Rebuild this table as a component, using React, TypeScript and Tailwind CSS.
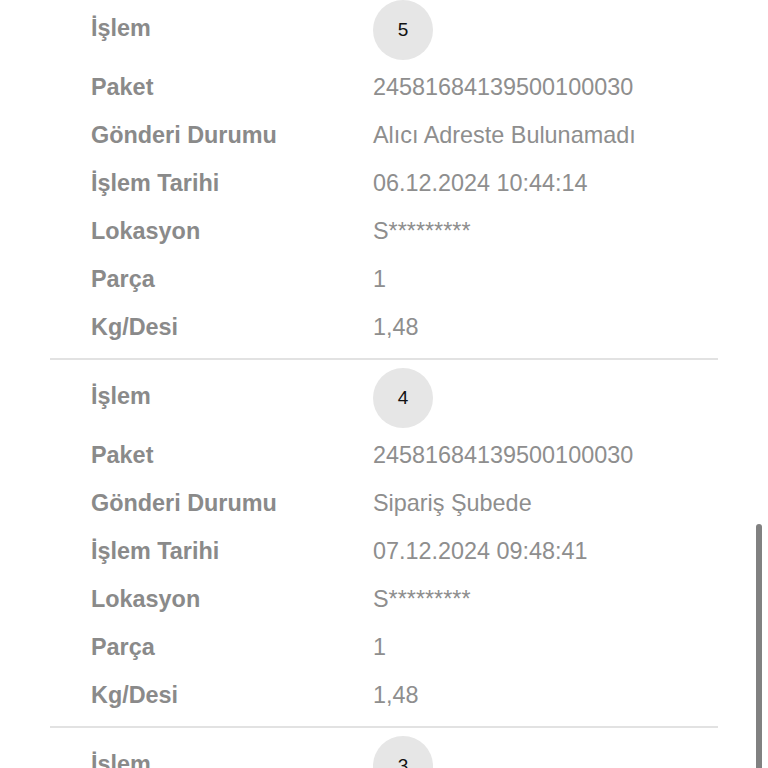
import React from "react";

type Step = {
  no: number;
  paket: string;
  durum: string;
  tarih: string;
  lokasyon: string;
  parca: string;
  kg: string;
};

const steps: Step[] = [
  { no: 5, paket: "24581684139500100030", durum: "Alıcı Adreste Bulunamadı", tarih: "06.12.2024 10:44:14", lokasyon: "S*********", parca: "1", kg: "1,48" },
  { no: 4, paket: "24581684139500100030", durum: "Sipariş Şubede", tarih: "07.12.2024 09:48:41", lokasyon: "S*********", parca: "1", kg: "1,48" },
  { no: 3, paket: "24581684139500100030", durum: "Sipariş Şubede", tarih: "07.12.2024 09:48:41", lokasyon: "S*********", parca: "1", kg: "1,48" },
];

const Row = ({ label, children }: { label: string; children: React.ReactNode }) => (
  <div className="flex h-12 items-center">
    <div className="w-[282px] shrink-0 font-bold text-[#8a8a8a]">{label}</div>
    <div className="text-[#8e8e8e]">{children}</div>
  </div>
);

export default function App() {
  return (
    <div className="relative h-[768px] w-[768px] overflow-hidden bg-white text-[23.4px] font-['Liberation_Sans',Arial,sans-serif]">
      <div className="mt-[-8px] px-[50px]">
        {steps.map((s) => (
          <div key={s.no} className="border-b-2 border-[#e2e2e2] pb-[6px] pt-2">
            <div className="pl-[41px]">
              <div className="flex h-16 items-start">
                <div className="flex h-[58px] w-[282px] shrink-0 items-center font-bold text-[#8a8a8a]">İşlem</div>
                <div className="flex h-[60px] w-[60px] items-center justify-center rounded-full bg-[#e6e6e6] text-[19px] text-[#111]">
                  {s.no}
                </div>
              </div>
              <Row label="Paket">{s.paket}</Row>
              <Row label="Gönderi Durumu">{s.durum}</Row>
              <Row label="İşlem Tarihi">{s.tarih}</Row>
              <Row label="Lokasyon">{s.lokasyon}</Row>
              <Row label="Parça">{s.parca}</Row>
              <Row label="Kg/Desi">{s.kg}</Row>
            </div>
          </div>
        ))}
      </div>
      {/* scrollbar overlay */}
      <div className="absolute right-[6px] top-[524px] h-[260px] w-[6px] rounded-full bg-[#818181]" />
    </div>
  );
}
